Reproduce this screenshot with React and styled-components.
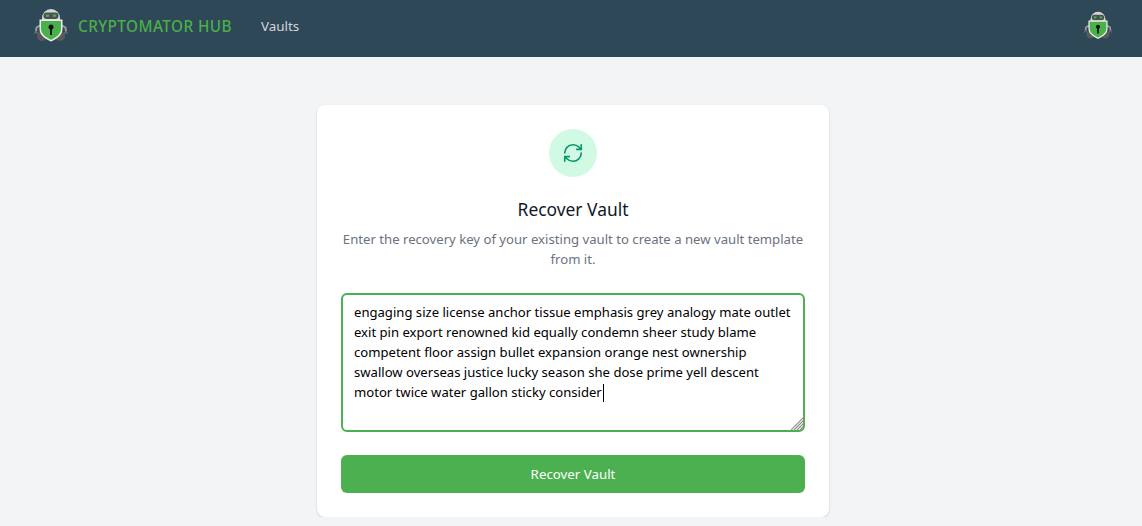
import React from "react";
import styled, { createGlobalStyle } from "styled-components";
import { RefreshCw } from "lucide-react";

const KEY_TEXT =
  "engaging size license anchor tissue emphasis grey analogy mate outlet exit pin export renowned kid equally condemn sheer study blame competent floor assign bullet expansion orange nest ownership swallow overseas justice lucky season she dose prime yell descent motor twice water gallon sticky consider";

const Logo = ({ size }) => (
  <svg width={size} height={size} viewBox="0 0 36 36">
    <circle cx="9" cy="28" r="5" fill="#5a5a5a" />
    <circle cx="27" cy="28" r="5" fill="#5a5a5a" />
    <path d="M8 17 L3.5 19.5 L3 24 M28 17 L32.5 19.5 L33 24" fill="none" stroke="#9a9d9f" strokeWidth="2" />
    <path d="M3 23 L1.5 26 M3 23 L5 26 M33 23 L34.5 26 M33 23 L31 26" fill="none" stroke="#6c6f71" strokeWidth="1.2" />
    <path d="M9 13 V10 A9 9 0 0 1 18 1 A9 9 0 0 1 27 10 V13 Z" fill="#d6d6d6" />
    <rect x="10.5" y="4.5" width="15" height="6.5" rx="3.2" fill="#4b5052" />
    <path d="M12.5 6.5 H16.5 L15.5 9 H13.5 Z M19.5 6.5 H23.5 L22.5 9 H20.5 Z" fill="#49b04a" />
    <path d="M6.5 11.5 H29.5 V21 C29.5 27 24 31 18 33.5 C12 31 6.5 27 6.5 21 Z" fill="#ececec" />
    <path d="M8 13 H28 V21 C28 26 23 29.5 18 31.8 C13 29.5 8 26 8 21 Z" fill="#49b04a" />
    <circle cx="18" cy="19" r="2.5" fill="#111" />
    <rect x="17" y="20" width="2" height="7" fill="#111" />
  </svg>
);

const GripLines = () => (
  <svg width="13" height="13" viewBox="0 0 13 13">
    <path
      d="M13 0 L0 13 M13 3 L3 13 M13 6 L6 13 M13 9 L9 13"
      stroke="#8d8d8d"
      strokeWidth="1.2"
      fill="none"
    />
  </svg>
);

const App = () => (
  <>
    <GlobalStyle />
    <NavBar>
      <Brand>
        <Logo size={36} />
        <BrandName>CRYPTOMATOR HUB</BrandName>
      </Brand>
      <NavLink>Vaults</NavLink>
      <Profile>
        <Logo size={30} />
      </Profile>
    </NavBar>
    <Main>
      <Card>
        <IconCircle>
          <RefreshCw size={22} strokeWidth={1.8} color="#059669" />
        </IconCircle>
        <Title>Recover Vault</Title>
        <Subtitle>Enter the recovery key of your existing vault to create a new vault template from it.</Subtitle>
        <AreaWrap>
          <KeyArea defaultValue={KEY_TEXT} spellCheck={false} rows={6} />
          <Caret />
          <Grip>
            <GripLines />
          </Grip>
        </AreaWrap>
        <SubmitButton>Recover Vault</SubmitButton>
      </Card>
    </Main>
  </>
);

export default App;

const GlobalStyle = createGlobalStyle`
  html, body {
    margin: 0;
    padding: 0;
    background: #f3f4f6;
    font-family: "Noto Sans", "Open Sans", sans-serif;
  }
  * {
    box-sizing: border-box;
  }
`;

const NavBar = styled.header`
  display: flex;
  align-items: center;
  height: 57px;
  padding: 0 24px 6px 33px;
  background: #2f4858;
`;

const Brand = styled.div`
  display: flex;
  align-items: center;
  gap: 9px;
`;

const BrandName = styled.span`
  color: #49b04a;
  font-size: 15.3px;
  font-weight: 500;
  letter-spacing: 0.42px;
`;

const NavLink = styled.a`
  margin-left: 29px;
  color: #d1d5db;
  font-size: 13.4px;
`;

const Profile = styled.div`
  display: flex;
  margin-left: auto;
  padding-right: 5px;
`;

const Main = styled.main`
  display: flex;
  justify-content: center;
  padding: 48px 0 0 4px;
`;

const Card = styled.section`
  display: flex;
  flex-direction: column;
  align-items: center;
  width: 512px;
  padding: 24px;
  background: #fff;
  border-radius: 8px;
  box-shadow: 0 1px 3px rgba(0, 0, 0, 0.1), 0 1px 2px rgba(0, 0, 0, 0.06);
`;

const IconCircle = styled.div`
  display: flex;
  align-items: center;
  justify-content: center;
  width: 48px;
  height: 48px;
  border-radius: 50%;
  background: #d1fae5;
`;

const Title = styled.h3`
  margin: 20px 0 0;
  color: #111827;
  font-size: 17.4px;
  font-weight: 400;
  line-height: 24px;
`;

const Subtitle = styled.p`
  margin: 8px 0 0;
  color: #6b7280;
  font-size: 13.15px;
  line-height: 20px;
  text-align: center;
`;

const AreaWrap = styled.div`
  position: relative;
  width: 100%;
  height: 139px;
  margin-top: 24px;
`;

const KeyArea = styled.textarea`
  display: block;
  width: 100%;
  height: 100%;
  padding: 7px 10px 7px 11px;
  border: 2px solid #4caf50;
  border-radius: 6px;
  outline: none;
  resize: none;
  background: #fff;
  color: #000;
  font-family: inherit;
  font-size: 13.1px;
  line-height: 20px;
`;

const Caret = styled.span`
  position: absolute;
  left: 262px;
  top: 91px;
  width: 1px;
  height: 18px;
  background: #000;
`;

const Grip = styled.span`
  position: absolute;
  right: 1px;
  bottom: 2px;
  display: flex;
`;

const SubmitButton = styled.button`
  width: 100%;
  height: 38px;
  margin-top: 23px;
  border: 0;
  border-radius: 6px;
  background: #4caf50;
  color: #fff;
  font-family: inherit;
  font-size: 13.3px;
  font-weight: 400;
`;
